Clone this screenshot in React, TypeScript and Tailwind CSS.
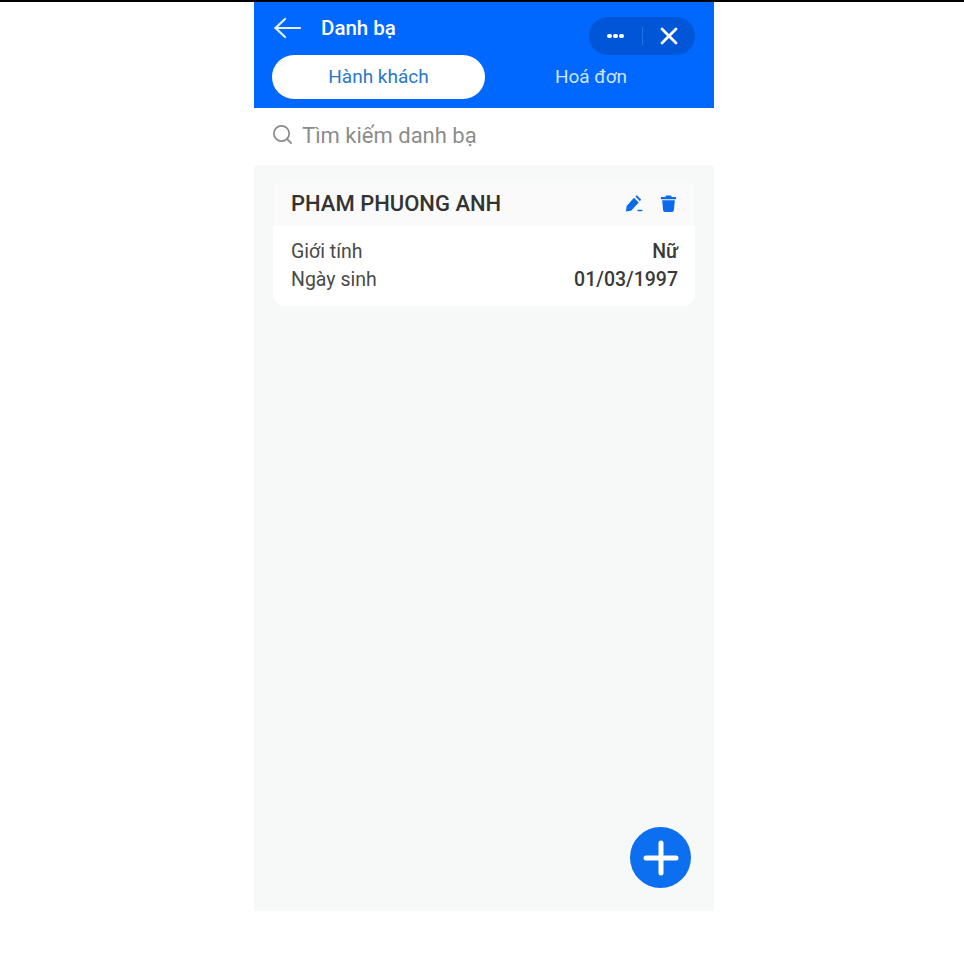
import { Search } from "lucide-react";

export default function App() {
  return (
    <div className="h-[961px] w-[964px] overflow-hidden bg-white font-['Roboto',sans-serif]">
      <div className="h-[2px] bg-black" />
      <div className="ml-[254px] flex h-[909px] w-[460px] flex-col">
        <header className="h-[106px] bg-[#0068ff]">
          <div className="flex h-[53px] items-start justify-between pl-[20px] pr-[19px]">
            <div className="flex items-center gap-[20px] pt-[11px]">
              <svg width="27" height="24" viewBox="0 0 27 24" fill="none" stroke="#e4f0ff" strokeWidth="2.200" strokeLinecap="round" strokeLinejoin="round">
                <path d="M1.500 12H26" />
                <path d="M11 3 1.500 12 11 21" />
              </svg>
              <span className="text-[20.500px] font-medium leading-[30px] text-white">Danh bạ</span>
            </div>
            <div className="mt-[15px] flex h-[38px] w-[106px] items-center rounded-full bg-[#0056d6]">
              <div className="flex w-[53px] items-center justify-center gap-[1px]">
                <span className="h-[4px] w-[5px] rounded-full bg-white" />
                <span className="h-[4px] w-[5px] rounded-full bg-white" />
                <span className="h-[4px] w-[5px] rounded-full bg-white" />
              </div>
              <div className="h-[18px] w-px bg-[#1f72e6]" />
              <div className="flex flex-1 justify-center">
                <svg width="18" height="18" viewBox="0 0 18 18" fill="none" stroke="#ffffff" strokeWidth="2.800" strokeLinecap="round">
                  <path d="M2 2 16 16" />
                  <path d="M16 2 2 16" />
                </svg>
              </div>
            </div>
          </div>
          <div className="flex pl-[18px]">
            <div className="flex h-[44px] w-[213px] items-center justify-center rounded-full bg-white text-[19px] text-[#2a78c8]">
              Hành khách
            </div>
            <div className="flex h-[44px] w-[212px] items-center justify-center text-[19px] text-[#cfe4fb]">
              Hoá đơn
            </div>
          </div>
        </header>
        <div className="flex h-[57px] items-center gap-[8px] bg-white pb-[3px] pl-[17px]">
          <Search size={23} strokeWidth={1.8} className="mb-[1px] text-[#8a8a8a]" />
          <span className="text-[22px] text-[#8c8c8c]">Tìm kiếm danh bạ</span>
        </div>
        <main className="relative flex-1 bg-[#f7f8f8] px-[19px] pt-[15px]">
          <div className="overflow-hidden rounded-[12px] bg-white">
            <div className="flex h-[46px] items-center justify-between bg-[#fafafa] pl-[18px] pr-[18px]">
              <span className="pt-[1px] text-[22px] font-medium text-[#333333]">PHAM PHUONG ANH</span>
              <div className="flex items-center gap-[17px]">
                <svg width="19" height="19" viewBox="0 0 20 20" fill="#0b6be8">
                  <path d="M10.500 4 15.500 9 7.500 17.500 2 18.500l.8-6z" />
                  <path d="M12 2.500 13.500 1.200 18 5.800 16.800 7.500z" />
                  <rect x="14" y="16.500" width="5.500" height="1.600" rx=".8" />
                </svg>
                <svg width="17" height="19" viewBox="0 0 18 20" fill="#0b6be8">
                  <path d="M6.500 1.500h5l1 1.600H17v2.400H1V3.100h4.500z" />
                  <path d="M2.300 6.500h13.400l-1 10.700a2 2 0 0 1-2 1.800H5.300a2 2 0 0 1-2-1.800z" />
                </svg>
              </div>
            </div>
            <div className="flex h-[80px] flex-col gap-[4px] pl-[18px] pr-[17px] pt-[14px] text-[19.500px] leading-[24px]">
              <div className="flex justify-between">
                <span className="text-[#4a4a4a]">Giới tính</span>
                <span className="font-medium text-[#3a3a3a]">Nữ</span>
              </div>
              <div className="flex justify-between">
                <span className="text-[#4a4a4a]">Ngày sinh</span>
                <span className="font-medium text-[#3a3a3a]">01/03/1997</span>
              </div>
            </div>
          </div>
          <button className="absolute bottom-[23px] right-[23px] flex h-[61px] w-[61px] items-center justify-center rounded-full bg-[#0b6fef]">
            <svg width="36" height="36" viewBox="0 0 36 36" fill="none" stroke="#ffffff" strokeWidth="5" strokeLinecap="round">
              <path d="M18 3V33" />
              <path d="M3 18H33" />
            </svg>
          </button>
        </main>
      </div>
    </div>
  );
}
